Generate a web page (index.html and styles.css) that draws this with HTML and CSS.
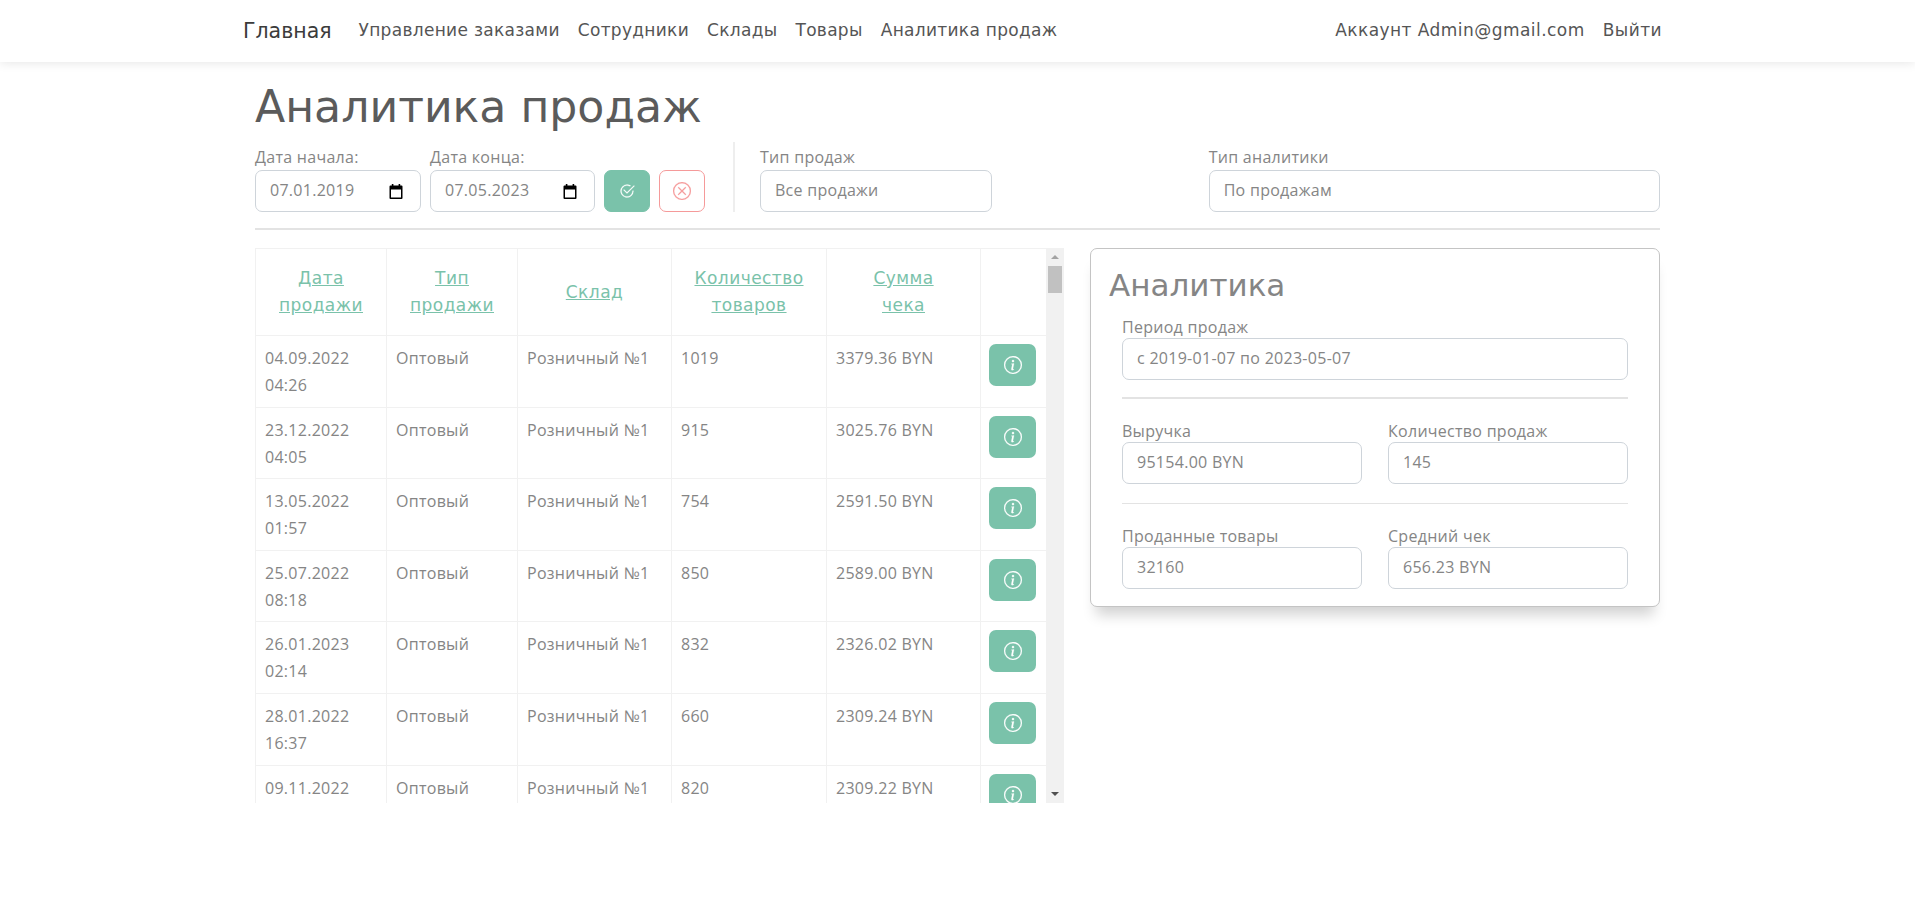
FILE: index.html
```html
<!DOCTYPE html>
<html lang="ru">
<head>
<meta charset="utf-8">
<title>Аналитика продаж</title>
<link rel="stylesheet" href="styles.css">
</head>
<body>
<nav class="navbar">
  <div class="nav-inner">
    <a class="brand">Главная</a>
    <div class="nav-links">
      <a class="nav-link">Управление заказами</a>
      <a class="nav-link">Сотрудники</a>
      <a class="nav-link">Склады</a>
      <a class="nav-link">Товары</a>
      <a class="nav-link">Аналитика продаж</a>
    </div>
    <div class="nav-right">
      <a class="nav-link">Аккаунт Admin@gmail.com</a>
      <a class="nav-link">Выйти</a>
    </div>
  </div>
</nav>
<main class="container">
  <h1 class="page-title">Аналитика продаж</h1>
  <section class="filters">
    <div class="date-group">
      <div class="field date-start">
        <label class="lbl">Дата начала:</label>
        <div class="control date-control"><span>07.01.2019</span>
          <svg class="cal" viewBox="0 0 14 15"><path d="M1.500 1.500h11a1 1 0 0 1 1 1v11.500a1 1 0 0 1-1 1h-11a1 1 0 0 1-1-1V2.500a1 1 0 0 1 1-1zM2 5.500V13.500h10V5.500z" fill-rule="evenodd"/><rect x="2.800" y="0" width="1.600" height="2.500"/><rect x="9.600" y="0" width="1.600" height="2.500"/></svg>
        </div>
      </div>
      <div class="field date-end">
        <label class="lbl">Дата конца:</label>
        <div class="control date-control"><span>07.05.2023</span>
          <svg class="cal" viewBox="0 0 14 15"><path d="M1.500 1.500h11a1 1 0 0 1 1 1v11.500a1 1 0 0 1-1 1h-11a1 1 0 0 1-1-1V2.500a1 1 0 0 1 1-1zM2 5.500V13.500h10V5.500z" fill-rule="evenodd"/><rect x="2.800" y="0" width="1.600" height="2.500"/><rect x="9.600" y="0" width="1.600" height="2.500"/></svg>
        </div>
      </div>
      <button class="btn btn-ok"><svg class="ico-16" viewBox="0 0 16 16" fill="currentColor"><path d="M2.5 8a5.500 5.500 0 0 1 8.250-4.764.5.5 0 0 0 .5-.866A6.500 6.500 0 1 0 14.500 8a.5.5 0 0 0-1 0 5.500 5.500 0 1 1-11 0z"/><path d="M15.354 3.354a.5.5 0 0 0-.708-.708L8 9.293 5.354 6.646a.5.5 0 1 0-.708.708l3 3a.5.5 0 0 0 .708 0l7-7z"/></svg></button>
      <button class="btn btn-cancel"><svg class="ico-18" viewBox="0 0 16 16" fill="currentColor"><path d="M8 15A7 7 0 1 1 8 1a7 7 0 0 1 0 14zm0 1A8 8 0 1 0 8 0a8 8 0 0 0 0 16z"/><path d="M4.646 4.646a.5.5 0 0 1 .708 0L8 7.293l2.646-2.647a.5.5 0 0 1 .708.708L8.707 8l2.647 2.646a.5.5 0 0 1-.708.708L8 8.707l-2.646 2.647a.5.5 0 0 1-.708-.708L7.293 8 4.646 5.354a.5.5 0 0 1 0-.708z"/></svg></button>
    </div>
    <div class="v-divider"></div>
    <div class="field sale-type">
      <label class="lbl">Тип продаж</label>
      <div class="control">Все продажи</div>
    </div>
    <div class="field analytics-type">
      <label class="lbl">Тип аналитики</label>
      <div class="control">По продажам</div>
    </div>
  </section>
  <hr class="rule rule-main">
  <section class="content">
    <div class="table-wrap">
      <div class="table-clip">
        <table class="sales">
          <colgroup>
            <col class="c1"><col class="c2"><col class="c3"><col class="c4"><col class="c5"><col class="c6">
          </colgroup>
          <thead>
            <tr><th><a>Дата продажи</a></th><th><a>Тип продажи</a></th><th><a>Склад</a></th><th><a>Количество товаров</a></th><th><a>Сумма<br>чека</a></th><th></th></tr>
          </thead>
          <tbody id="rows">
            <tr><td>04.09.2022 04:26</td><td>Оптовый</td><td>Розничный №1</td><td>1019</td><td>3379.36 BYN</td><td class="act"><button class="btn-info"><svg class="ico-18" viewBox="0 0 16 16" fill="currentColor"><path d="M8 15A7 7 0 1 1 8 1a7 7 0 0 1 0 14zm0 1A8 8 0 1 0 8 0a8 8 0 0 0 0 16z"/><path d="m8.930 6.588-2.290.287-.082.380.450.083c.294.070.352.176.288.469l-.738 3.468c-.194.897.105 1.319.808 1.319.545 0 1.178-.252 1.465-.598l.088-.416c-.2.176-.492.246-.686.246-.275 0-.375-.193-.304-.533L8.930 6.588zM9 4.500a1 1 0 1 1-2 0 1 1 0 0 1 2 0z"/></svg></button></td></tr>
            <tr><td>23.12.2022 04:05</td><td>Оптовый</td><td>Розничный №1</td><td>915</td><td>3025.76 BYN</td><td class="act"><button class="btn-info"><svg class="ico-18" viewBox="0 0 16 16" fill="currentColor"><path d="M8 15A7 7 0 1 1 8 1a7 7 0 0 1 0 14zm0 1A8 8 0 1 0 8 0a8 8 0 0 0 0 16z"/><path d="m8.930 6.588-2.290.287-.082.380.450.083c.294.070.352.176.288.469l-.738 3.468c-.194.897.105 1.319.808 1.319.545 0 1.178-.252 1.465-.598l.088-.416c-.2.176-.492.246-.686.246-.275 0-.375-.193-.304-.533L8.930 6.588zM9 4.500a1 1 0 1 1-2 0 1 1 0 0 1 2 0z"/></svg></button></td></tr>
            <tr><td>13.05.2022 01:57</td><td>Оптовый</td><td>Розничный №1</td><td>754</td><td>2591.50 BYN</td><td class="act"><button class="btn-info"><svg class="ico-18" viewBox="0 0 16 16" fill="currentColor"><path d="M8 15A7 7 0 1 1 8 1a7 7 0 0 1 0 14zm0 1A8 8 0 1 0 8 0a8 8 0 0 0 0 16z"/><path d="m8.930 6.588-2.290.287-.082.380.450.083c.294.070.352.176.288.469l-.738 3.468c-.194.897.105 1.319.808 1.319.545 0 1.178-.252 1.465-.598l.088-.416c-.2.176-.492.246-.686.246-.275 0-.375-.193-.304-.533L8.930 6.588zM9 4.500a1 1 0 1 1-2 0 1 1 0 0 1 2 0z"/></svg></button></td></tr>
            <tr><td>25.07.2022 08:18</td><td>Оптовый</td><td>Розничный №1</td><td>850</td><td>2589.00 BYN</td><td class="act"><button class="btn-info"><svg class="ico-18" viewBox="0 0 16 16" fill="currentColor"><path d="M8 15A7 7 0 1 1 8 1a7 7 0 0 1 0 14zm0 1A8 8 0 1 0 8 0a8 8 0 0 0 0 16z"/><path d="m8.930 6.588-2.290.287-.082.380.450.083c.294.070.352.176.288.469l-.738 3.468c-.194.897.105 1.319.808 1.319.545 0 1.178-.252 1.465-.598l.088-.416c-.2.176-.492.246-.686.246-.275 0-.375-.193-.304-.533L8.930 6.588zM9 4.500a1 1 0 1 1-2 0 1 1 0 0 1 2 0z"/></svg></button></td></tr>
            <tr><td>26.01.2023 02:14</td><td>Оптовый</td><td>Розничный №1</td><td>832</td><td>2326.02 BYN</td><td class="act"><button class="btn-info"><svg class="ico-18" viewBox="0 0 16 16" fill="currentColor"><path d="M8 15A7 7 0 1 1 8 1a7 7 0 0 1 0 14zm0 1A8 8 0 1 0 8 0a8 8 0 0 0 0 16z"/><path d="m8.930 6.588-2.290.287-.082.380.450.083c.294.070.352.176.288.469l-.738 3.468c-.194.897.105 1.319.808 1.319.545 0 1.178-.252 1.465-.598l.088-.416c-.2.176-.492.246-.686.246-.275 0-.375-.193-.304-.533L8.930 6.588zM9 4.500a1 1 0 1 1-2 0 1 1 0 0 1 2 0z"/></svg></button></td></tr>
            <tr><td>28.01.2022 16:37</td><td>Оптовый</td><td>Розничный №1</td><td>660</td><td>2309.24 BYN</td><td class="act"><button class="btn-info"><svg class="ico-18" viewBox="0 0 16 16" fill="currentColor"><path d="M8 15A7 7 0 1 1 8 1a7 7 0 0 1 0 14zm0 1A8 8 0 1 0 8 0a8 8 0 0 0 0 16z"/><path d="m8.930 6.588-2.290.287-.082.380.450.083c.294.070.352.176.288.469l-.738 3.468c-.194.897.105 1.319.808 1.319.545 0 1.178-.252 1.465-.598l.088-.416c-.2.176-.492.246-.686.246-.275 0-.375-.193-.304-.533L8.930 6.588zM9 4.500a1 1 0 1 1-2 0 1 1 0 0 1 2 0z"/></svg></button></td></tr>
            <tr><td>09.11.2022 16:02</td><td>Оптовый</td><td>Розничный №1</td><td>820</td><td>2309.22 BYN</td><td class="act"><button class="btn-info"><svg class="ico-18" viewBox="0 0 16 16" fill="currentColor"><path d="M8 15A7 7 0 1 1 8 1a7 7 0 0 1 0 14zm0 1A8 8 0 1 0 8 0a8 8 0 0 0 0 16z"/><path d="m8.930 6.588-2.290.287-.082.380.450.083c.294.070.352.176.288.469l-.738 3.468c-.194.897.105 1.319.808 1.319.545 0 1.178-.252 1.465-.598l.088-.416c-.2.176-.492.246-.686.246-.275 0-.375-.193-.304-.533L8.930 6.588zM9 4.500a1 1 0 1 1-2 0 1 1 0 0 1 2 0z"/></svg></button></td></tr>
          </tbody>
        </table>
      </div>
      <div class="scrollbar">
        <span class="arrow arrow-up"></span>
        <span class="thumb"></span>
        <span class="arrow arrow-down"></span>
      </div>
    </div>
    <aside class="card">
      <h2 class="card-title">Аналитика</h2>
      <div class="card-body">
        <div class="field">
          <label class="lbl">Период продаж</label>
          <div class="control">с 2019-01-07 по 2023-05-07</div>
        </div>
        <hr class="rule rule-thick">
        <div class="pair">
          <div class="field"><label class="lbl">Выручка</label><div class="control">95154.00 BYN</div></div>
          <div class="field"><label class="lbl">Количество продаж</label><div class="control">145</div></div>
        </div>
        <hr class="rule rule-thin">
        <div class="pair">
          <div class="field"><label class="lbl">Проданные товары</label><div class="control">32160</div></div>
          <div class="field"><label class="lbl">Средний чек</label><div class="control">656.23 BYN</div></div>
        </div>
      </div>
    </aside>
  </section>
</main>
</body>
</html>
```
FILE: styles.css
```css
* { box-sizing: border-box; }
html, body { margin: 0; padding: 0; }
body {
  width: 1915px;
  height: 920px;
  overflow: hidden;
  background: #fff;
  color: #858585;
  font-family: "Open Sans", "Noto Sans", sans-serif;
  font-size: 16px;
  line-height: 1.6;
  letter-spacing: .28px;
}
.navbar {
  height: 62px;
  background: #fff;
  box-shadow: 0 1px 10px rgba(0, 0, 0, .1);
  position: relative;
}
.nav-inner {
  width: 1429px;
  height: 100%;
  margin: 0 auto;
  display: flex;
  align-items: center;
}
.brand {
  font-family: "DejaVu Sans", sans-serif;
  font-size: 20.5px;
  color: #3b3b3b;
  margin-right: 18px;
  letter-spacing: 0;
}
.nav-links, .nav-right { display: flex; align-items: center; }
.nav-right { margin-left: auto; margin-right: 1px; }
.nav-link {
  font-family: "DejaVu Sans", sans-serif;
  font-size: 17px;
  color: #555;
  padding: 0 9px;
  white-space: nowrap;
  letter-spacing: .3px;
}
.nav-right .nav-link { letter-spacing: .45px; }
.container { width: 1405px; margin: 0 auto; }
.page-title {
  margin: 16px 0 0;
  font-family: "DejaVu Sans", sans-serif;
  font-weight: 400;
  font-size: 44.2px;
  line-height: 58px;
  color: #5b5b5b;
  letter-spacing: 0;
}
.filters { display: flex; margin-top: 12px; height: 64px; }
.date-group { display: flex; align-items: flex-end; gap: 9px; }
.field { display: flex; flex-direction: column; }
.lbl { line-height: 22px; height: 22px; white-space: nowrap; }
.filters .lbl { line-height: 19px; }
.control {
  height: 42px;
  border: 1px solid #ced4da;
  border-radius: 7px;
  padding: 0 14px;
  display: flex;
  align-items: center;
  background: #fff;
  white-space: nowrap;
}
.date-control { justify-content: space-between; padding-right: 17px; }
.date-start { width: 166px; }
.date-end { width: 165px; }
.cal { width: 14px; height: 15px; fill: #000; }
.btn {
  width: 46px;
  height: 42px;
  border-radius: 7px;
  display: flex;
  align-items: center;
  justify-content: center;
  padding: 0;
  cursor: pointer;
}
.btn-ok { background: #7ac2aa; border: 1px solid #7ac2aa; color: #fff; }
.btn-cancel { background: #fff; border: 1px solid #f59a9a; color: #f59a9a; }
.ico-16 { width: 16px; height: 16px; stroke: currentColor; stroke-width: .2; }
.ico-18 { width: 18px; height: 18px; stroke: currentColor; stroke-width: .2; }
.v-divider { width: 2px; height: 70px; margin: -6px 25px 0 28px; background: #eee; }
.sale-type { width: 232px; }
.analytics-type { width: 452px; margin-left: 217px; }
.rule { border: 0; margin: 0; background: #e3e3e3; }
.rule-main { height: 2px; margin-top: 16px; }
.content { display: flex; margin-top: 18px; align-items: flex-start; }
.table-wrap { width: 809px; height: 555px; display: flex; }
.table-clip { width: 791px; height: 555px; overflow: hidden; }
.sales { width: 791px; table-layout: fixed; border-collapse: collapse; }
.c1 { width: 131px; } .c2 { width: 131px; } .c3 { width: 154px; }
.c4 { width: 155px; } .c5 { width: 154px; } .c6 { width: 66px; }
.sales th, .sales td { border: 1px solid #f1f1f1; vertical-align: top; }
.sales th {
  height: 87px;
  padding: 0 12px;
  vertical-align: middle;
  text-align: center;
  font-weight: 400;
  font-family: "DejaVu Sans", sans-serif;
  font-size: 17px;
  line-height: 27px;
  letter-spacing: .45px;
}
.sales th a { color: #7ac2aa; text-decoration: underline; }
.sales td { height: 71.6px; padding: 9px 9px 0; line-height: 27px; }
.sales td.act { padding: 8px 0 0 8px; }
.btn-info {
  width: 47px;
  height: 42px;
  border: 0;
  border-radius: 7px;
  background: #7ac2aa;
  color: #fff;
  padding: 0;
  display: flex;
  align-items: center;
  justify-content: center;
}
.scrollbar {
  width: 18px;
  height: 555px;
  background: #f1f1f1;
  display: flex;
  flex-direction: column;
  align-items: center;
}
.arrow { width: 0; height: 0; border-left: 4px solid transparent; border-right: 4px solid transparent; }
.arrow-up { margin-top: 7px; border-bottom: 4px solid #a3a3a3; }
.thumb { width: 14px; height: 27px; margin-top: 7px; background: #c1c1c1; }
.arrow-down { margin-top: auto; margin-bottom: 7px; border-top: 4px solid #505050; }
.card {
  width: 570px;
  height: 359px;
  margin-left: 26px;
  border: 1px solid #c4c4c4;
  border-radius: 7px;
  background: #fff;
  padding: 14px 31px 0 18px;
  box-shadow: 0 14px 14px -6px rgba(0, 0, 0, .18);
}
.card-title {
  margin: 0;
  font-family: "DejaVu Sans", sans-serif;
  font-weight: 400;
  font-size: 31px;
  line-height: 44px;
  color: #858585;
  letter-spacing: 0;
}
.card-body { margin: 9px 0 0 13px; }
.pair { display: flex; justify-content: space-between; }
.pair .field { width: 240px; }
.rule-thick { height: 2px; margin: 17px 0 21px; }
.rule-thin { height: 1px; margin: 19px 0 21px; }
```
